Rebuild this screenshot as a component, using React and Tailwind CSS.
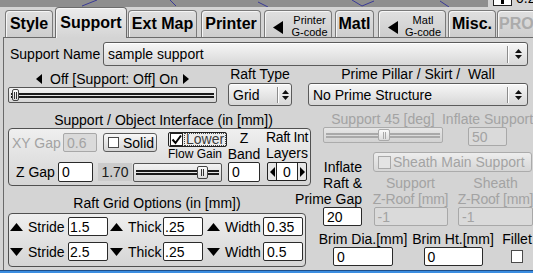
import React from 'react';

// small filled triangle, used for arrows on labels, tabs and spinner
function Arrow({ dir = 'l', w = 7, h = 11, color = '#000', cls = '' }) {
  let pts = `${w},0 ${w},${h} 0,${h / 2}`;
  if (dir === 'r') pts = `0,0 0,${h} ${w},${h / 2}`;
  if (dir === 'u') pts = `0,${h} ${w / 2},0 ${w},${h}`;
  if (dir === 'd') pts = `0,0 ${w},0 ${w / 2},${h}`;
  return (
    <svg width={w} height={h} className={`shrink-0 ${cls}`}>
      <polygon points={pts} fill={color} />
    </svg>
  );
}

const UpDown = () => (
  <svg width="7" height="12" className="shrink-0">
    <polygon points="0,5 3.5,1 7,5" fill="#111" />
    <polygon points="0,7 3.5,11 7,7" fill="#111" />
  </svg>
);

const Check = () => (
  <svg width="11" height="11" className="shrink-0">
    <path d="M1.5 5.5 L4.5 9 L10 1.5" stroke="#000" strokeWidth="2" fill="none" />
  </svg>
);

function Tab({ sel, start, cls = '', children }) {
  return (
    <div
      className={`flex shrink-0 items-center rounded-t-[4px] border border-b-0 shadow-[inset_1px_1px_0_#f6f6f6] ${
        start ? 'justify-start' : 'justify-center'
      } ${
        sel
          ? 'relative z-10 -mb-px h-[31px] border-[#6c6c6c] bg-linear-to-b from-[#ececec] to-[#d4d4d4]'
          : 'h-[27px] border-[#7a7a7a] bg-linear-to-b from-[#e0e0e0] to-[#cdcdcd]'
      } ${cls}`}
    >
      {children}
    </div>
  );
}

function Choice({ label, cls, sep, btn }) {
  return (
    <div
      className={`flex shrink-0 items-center rounded-[3px] border border-[#5b5b5b] bg-linear-to-b from-[#f7f7f7] to-[#d7d7d7] shadow-[inset_0_1px_0_#ffffff] ${cls}`}
    >
      <span className="flex-1 whitespace-nowrap pl-[4px]">{label}</span>
      <span className={`w-[2px] border-l border-r border-l-[#8c8c8c] border-r-white ${sep}`} />
      <span className={`flex justify-center ${btn}`}>
        <UpDown />
      </span>
    </div>
  );
}

function Field({ v, cls, dis, pad = 'pl-[3px]' }) {
  return (
    <div
      className={`flex shrink-0 items-center overflow-hidden whitespace-nowrap rounded-[2px] border ${pad} ${
        dis ? 'border-[#a8a8a8] bg-[#dadada] text-[#a3a3a3]' : 'border-[#2a2a2a] bg-white text-black'
      } ${cls}`}
    >
      {v}
    </div>
  );
}

function Slider({ cls, thumb, dis }) {
  return (
    <div
      className={`relative flex shrink-0 items-center rounded-[2px] border bg-linear-to-b ${
        dis ? 'border-[#ababab] from-[#e6e6e6] to-[#d2d2d2]' : 'border-[#555555] from-[#f3f3f3] to-[#d6d6d6]'
      } ${cls}`}
    >
      <div className={`mx-[2px] h-[5px] flex-1 border-y-2 ${dis ? 'border-[#a9a9a9]' : 'border-[#1a1a1a]'}`} />
      <div
        className={`absolute flex items-center justify-center gap-[1px] rounded-[2px] border bg-linear-to-b from-[#fbfbfb] to-[#dcdcdc] ${
          dis ? 'border-[#a9a9a9]' : 'border-[#444444]'
        } ${thumb}`}
      >
        <span className={`h-[7px] w-px ${dis ? 'bg-[#a9a9a9]' : 'bg-[#333333]'}`} />
        <span className={`h-[7px] w-px ${dis ? 'bg-[#a9a9a9]' : 'bg-[#333333]'}`} />
      </div>
    </div>
  );
}

function GLabel({ t, up, cls }) {
  return (
    <div className={`flex shrink-0 items-center whitespace-nowrap ${cls}`}>
      <Arrow dir={up ? 'u' : 'd'} w={13} h={8} cls="mr-[5px]" />
      <span>{t}</span>
    </div>
  );
}

function GridRow({ up, vals, cls }) {
  return (
    <div className={`flex h-[19px] items-center ${cls}`}>
      <GLabel t="Stride" up={up} cls="ml-[1px] w-[58px]" />
      <Field v={vals[0]} cls="h-[19px] w-[40px]" pad="pl-[1px]" />
      <GLabel t="Thick" up={up} cls="ml-[2px] w-[53px]" />
      <Field v={vals[1]} cls="h-[19px] w-[40px]" pad="pl-[1px]" />
      <GLabel t="Width" up={up} cls="ml-[4px] w-[56px]" />
      <Field v={vals[2]} cls="h-[19px] w-[40px]" />
    </div>
  );
}

function ZRoof({ label, cls, fw }) {
  return (
    <div className={`flex w-[75px] shrink-0 flex-col items-center text-[#a3a3a3] ${cls}`}>
      <span className="h-[16px] whitespace-nowrap">{label}</span>
      <span className="h-[16px] whitespace-nowrap tracking-[-0.2px]">Z-Roof [mm]</span>
      <Field dis v="-1" cls={`h-[19px] ${fw}`} />
    </div>
  );
}

const groupCls = 'shrink-0 rounded-[4px] border border-[#505050] bg-linear-to-b from-[#efefef] to-[#d5d5d5]';

export default function App() {
  return (
    <div className="h-[273px] w-[533px] select-none overflow-hidden bg-[#d4d4d4] font-['Liberation_Sans',Arial,sans-serif] text-[14px] leading-[16px] text-black">
      {/* strip of the 3D view behind the window */}
      <div className="flex h-[7px]">
        <svg width="488" height="7" className="shrink-0 bg-[#8e8e8e]">
          <g stroke="#3a3a96" strokeWidth="1" fill="none">
            <path d="M82 6 L97 0" />
            <path d="M170 0 L176 6" />
            <path d="M258 2 L268 7" />
            <path d="M352 0 L362 6 L374 1" />
            <path d="M440 1 L449 7" />
          </g>
        </svg>
        <div className="ml-[5px] flex h-[6px] w-[19px] shrink-0 justify-center border border-t-0 border-[#222222] bg-white">
          <span className="h-[4px] w-[3px] bg-black" />
        </div>
        <span className="-mt-[10px] ml-[4px] h-[16px] shrink-0">0.2</span>
      </div>

      {/* tabs */}
      <div className="flex h-[30px] items-end text-[16px] font-bold leading-[18px]">
        <Tab cls="ml-[5px] w-[48px]">Style</Tab>
        <Tab sel cls="ml-[2px] w-[72px]">Support</Tab>
        <Tab cls="ml-[1px] w-[69px]">Ext Map</Tab>
        <Tab cls="ml-[4px] w-[60px]">Printer</Tab>
        <Tab start cls="ml-[3px] w-[68px]">
          <Arrow dir="l" w={10} h={13} cls="ml-[8px] mt-[6px]" />
          <div className="mt-[4px] flex flex-1 flex-col items-center pl-[5px] text-[11px] font-normal leading-[12px]">
            <span>Printer</span>
            <span>G-code</span>
          </div>
        </Tab>
        <Tab cls="ml-[3px] w-[39px]">Matl</Tab>
        <Tab start cls="ml-[4px] w-[68px]">
          <Arrow dir="l" w={10} h={13} cls="ml-[9px] mt-[6px]" />
          <div className="mt-[4px] flex flex-1 flex-col items-center pl-[3px] text-[11px] font-normal leading-[12px]">
            <span>Matl</span>
            <span>G-code</span>
          </div>
        </Tab>
        <Tab cls="ml-[2px] w-[48px]">Misc.</Tab>
        <Tab start cls="ml-[1px] w-[48px] pl-[1px] text-[#ababab]">PRO</Tab>
      </div>

      {/* support panel */}
      <div className="ml-[3px] flex h-[233px] flex-col border-l border-t border-[#6a6a6a]">
        <div className="mt-[4px] flex h-[24px] items-center">
          <span className="w-[99px] shrink-0 whitespace-nowrap pl-[6px]">Support Name</span>
          <Choice label="sample support" cls="h-[24px] w-[425px]" sep="h-[17px]" btn="w-[18px]" />
        </div>

        <div className="flex">
          <div className="ml-[4px] flex w-[209px] shrink-0 flex-col">
            <div className="mt-[5px] flex h-[16px] items-center justify-center whitespace-nowrap">
              <Arrow dir="l" w={6} h={10} cls="mr-[8px]" />
              <span>Off [Support: Off] On</span>
              <Arrow dir="r" w={6} h={10} cls="ml-[5px]" />
            </div>
            <Slider cls="h-[16px] w-[209px]" thumb="left-[3px] top-[1px] bottom-[1px] w-[7px]" />
          </div>
          <div className="ml-[11px] flex w-[64px] shrink-0 flex-col">
            <span className="flex h-[16px] justify-center whitespace-nowrap">Raft Type</span>
            <Choice label="Grid" cls="mt-[1px] h-[23px] w-[64px]" sep="h-[16px]" btn="w-[12px]" />
          </div>
          <div className="ml-[16px] flex w-[220px] shrink-0 flex-col">
            <span className="flex h-[16px] justify-center whitespace-pre">Prime Pillar / Skirt /  Wall</span>
            <Choice label="No Prime Structure" cls="mt-[1px] h-[23px] w-[220px]" sep="h-[16px]" btn="w-[18px]" />
          </div>
        </div>

        <div className="flex">
          {/* left column */}
          <div className="flex w-[309px] shrink-0 flex-col">
            <div className="ml-[4px] mt-[6px] flex h-[16px] w-[303px] justify-center whitespace-nowrap pl-[8px]">
              Support / Object Interface (in [mm])
            </div>
            <div className={`ml-[4px] flex h-[58px] w-[303px] items-start ${groupCls}`}>
              <div className="flex w-[89px] shrink-0 flex-col">
                <div className="mt-[4px] flex h-[19px] items-center pl-[3px]">
                  <span className="w-[51px] shrink-0 whitespace-nowrap text-[#a3a3a3]">XY Gap</span>
                  <Field dis v="0.6" cls="h-[19px] w-[34px]" />
                </div>
                <div className="mt-[10px] flex h-[20px] items-center pl-[7px]">
                  <span className="w-[42px] shrink-0 whitespace-nowrap">Z Gap</span>
                  <Field v="0" cls="h-[20px] w-[35px]" />
                </div>
              </div>
              <div className="flex w-[129px] shrink-0 flex-col">
                <div className="flex h-[33px]">
                  <div className="ml-[5px] mt-[4px] flex h-[19px] w-[54px] shrink-0 items-center rounded-[3px] border border-[#5e5e5e] bg-linear-to-b from-[#f8f8f8] to-[#d4d4d4]">
                    <span className="ml-[4px] h-[11px] w-[11px] shrink-0 border border-[#4a4a4a] bg-white" />
                    <span className="ml-[4px]">Solid</span>
                  </div>
                  <div className="ml-[11px] flex w-[59px] shrink-0 flex-col">
                    <div className="mt-[3px] flex h-[15px] items-center rounded-[2px] border border-[#222222] bg-[#ececec]">
                      <span className="ml-[1px] flex h-[13px] w-[13px] shrink-0 items-center justify-center border border-[#222222] bg-white">
                        <Check />
                      </span>
                      <span className="ml-[1px] whitespace-nowrap border border-dotted border-[#444444] px-[1px] leading-[11px] text-[#3a3a3a]">
                        Lower
                      </span>
                    </div>
                    <span className="h-[15px] whitespace-nowrap text-[12px] leading-[15px]">Flow Gain</span>
                  </div>
                </div>
                <div className="mt-[1px] flex">
                  <div className="flex h-[18px] w-[34px] shrink-0 items-center justify-center bg-[#cbcbcb] text-[#1a1a1a]">1.70</div>
                  <Slider cls="ml-[1px] h-[19px] w-[89px]" thumb="left-[63px] top-[2px] bottom-[2px] w-[11px]" />
                </div>
              </div>
              <div className="ml-[1px] flex w-[32px] shrink-0 flex-col items-center">
                <span className="mt-[1px] h-[16px]">Z</span>
                <span className="h-[16px]">Band</span>
                <Field v="0" cls="h-[20px] w-[32px]" />
              </div>
              <div className="ml-[7px] flex w-[40px] shrink-0 flex-col items-center">
                <span className="h-[16px] whitespace-nowrap tracking-[-0.4px]">Raft Int</span>
                <span className="h-[16px]">Layers</span>
                <div className="mt-[1px] flex h-[19px] w-[40px] items-stretch rounded-[2px] border border-[#222222] bg-[#e6e6e6]">
                  <span className="flex w-[8px] items-center justify-center">
                    <Arrow dir="l" w={5} h={10} />
                  </span>
                  <span className="flex flex-1 items-center justify-center border-x border-[#222222] bg-white">0</span>
                  <span className="flex w-[8px] items-center justify-center">
                    <Arrow dir="r" w={5} h={10} />
                  </span>
                </div>
              </div>
            </div>

            <div className="ml-[4px] mt-[9px] flex h-[16px] w-[298px] justify-center whitespace-nowrap">
              Raft Grid Options (in [mm])
            </div>
            <div className={`ml-[4px] mt-[2px] flex h-[54px] w-[298px] flex-col ${groupCls}`}>
              <GridRow up vals={['1.5', '.25', '0.35']} cls="mt-[3px]" />
              <GridRow vals={['2.5', '.25', '0.5']} cls="mt-[6px]" />
            </div>
          </div>

          {/* right column */}
          <div className="flex w-[220px] shrink-0 flex-col">
            <div className="mt-[5px] flex h-[16px] whitespace-nowrap text-[#a3a3a3]">
              <span className="ml-[10px] flex w-[120px] shrink-0 justify-center">Support 45 [deg]</span>
              <span className="ml-[25px] flex w-[39px] shrink-0 justify-center">Inflate Support</span>
            </div>
            <div className="flex h-[20px] items-start">
              <Slider dis cls="ml-[10px] h-[16px] w-[120px]" thumb="left-[54px] top-[1px] bottom-[1px] w-[12px]" />
              <Field dis v="50" cls="ml-[25px] h-[19px] w-[39px]" />
            </div>
            <div className="flex">
              <div className="mt-[12px] flex w-[49px] shrink-0 flex-col items-end">
                <span className="h-[16px] whitespace-nowrap">Inflate</span>
                <span className="h-[16px] whitespace-nowrap">Raft &amp;</span>
                <span className="h-[16px] whitespace-nowrap">Prime Gap</span>
                <Field v="20" cls="h-[19px] w-[39px]" />
              </div>
              <div className="flex flex-col">
                <div className="ml-[11px] mt-[5px] flex h-[20px] w-[159px] shrink-0 items-center rounded-[3px] border border-[#ababab] bg-linear-to-b from-[#ededed] to-[#d6d6d6] text-[#a3a3a3]">
                  <span className="ml-[4px] h-[13px] w-[13px] shrink-0 border border-[#a9a9a9] bg-[#e4e4e4]" />
                  <span className="ml-[2px] whitespace-nowrap">Sheath Main Support</span>
                </div>
                <div className="mt-[3px] flex">
                  <ZRoof label="Support" cls="ml-[11px]" fw="w-[74px]" />
                  <ZRoof label="Sheath" cls="ml-[10px]" fw="w-[75px]" />
                </div>
              </div>
            </div>
            <div className="mt-[5px] flex">
              <div className="flex w-[100px] shrink-0 flex-col items-center">
                <span className="h-[16px] whitespace-nowrap">Brim Dia.[mm]</span>
                <Field v="0" cls="h-[19px] w-[60px]" />
              </div>
              <div className="flex w-[80px] shrink-0 flex-col items-center">
                <span className="h-[16px] whitespace-nowrap">Brim Ht.[mm]</span>
                <Field v="0" cls="h-[19px] w-[59px]" />
              </div>
              <div className="flex w-[48px] shrink-0 flex-col items-center">
                <span className="h-[16px] whitespace-nowrap">Fillet</span>
                <span className="mt-[3px] h-[13px] w-[12px] border border-[#4a4a4a] bg-white" />
              </div>
            </div>
          </div>
        </div>
      </div>
      <div className="h-[3px] border-t border-[#1e4f8a] bg-[#3b8de0]" />
    </div>
  );
}
